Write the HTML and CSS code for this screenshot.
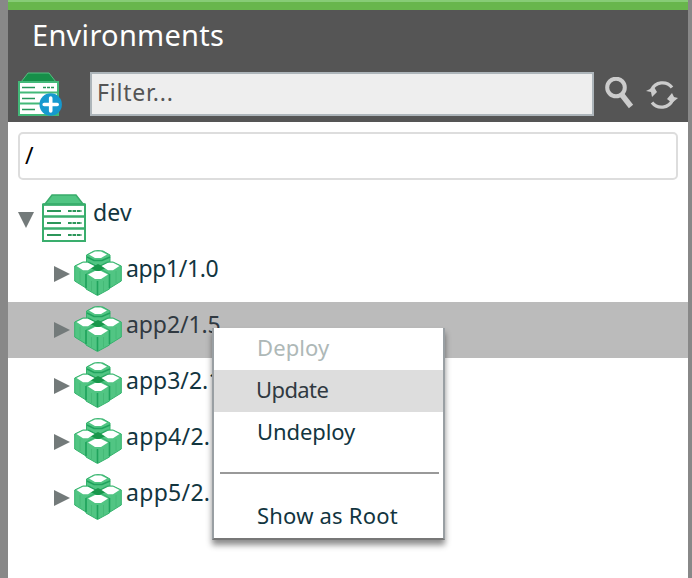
FILE: index.html
```html
<!DOCTYPE html>
<html lang="en">
<head>
<meta charset="utf-8">
<title>Environments</title>
<link rel="stylesheet" href="styles.css">
</head>
<body>
<svg class="defs" aria-hidden="true">
  <symbol id="cubes" viewBox="0 0 48 48">
    <g fill="#51c583" stroke="#35b36d" stroke-width="1" stroke-linejoin="round">
      <path d="M12.500 5L20 1L24 .6L29 1L36 5V12L24 18L12.500 12Z"/>
      <path d="M.7 16L9 12L15 12L24 17V32L12 38L.7 31Z"/>
      <path d="M47.300 16L39 12L33 12L24 17V32L36 38L47.300 31Z"/>
      <path d="M12 24L20 20L28 20L35.500 24V39L23.500 45.500L12 39Z"/>
    </g>
    <path d="M13 7L20 10.500H28L36 7M12 24V38M35.500 24V38M23.500 31V45M14 12.500L24 17.500L35 12.500" fill="none" stroke="#20a35d" stroke-width="1.600"/>
    <path d="M16 18L24 14L32 18L24 21.500Z" fill="#18974b"/>
    <path d="M15 4.500L21 1.600H27L33 4.500L27 8H21ZM2.500 16L9 12.700H14L20.500 16L14 20.300H9ZM27.500 16L34 12.700H39L45.500 16L39 20.300H34ZM14 24.500L21 21H27L34 24.500L27 29H21Z" fill="#fff"/>
    <path d="M17.500 31V41M29.500 31V41M6 21V33M42 21V33" stroke="#45ba77" stroke-width="1"/>
  </symbol>
</svg>
<main class="panel">
  <header class="header">
    <h1 class="title">Environments</h1>
    <div class="toolbar">
      <svg class="add" viewBox="0 0 44 44">
        <path d="M10 1H31L38 10H3Z" fill="#168f49" stroke="#55bd80"/>
        <path d="M1 10H40V43H1Z" fill="#fff" stroke="#43b979" stroke-width="2"/>
        <path d="M1 20.500H40M1 31.500H40" stroke="#43b979" stroke-width="2"/>
        <path d="M4 15.500H17M4 26.500H17M4 37.500H17" stroke="#26965a" stroke-width="1.600"/>
        <path d="M25 15.500H37" stroke="#26965a" stroke-width="1.600" stroke-dasharray="3 1"/>
        <circle cx="32.700" cy="32.500" r="11.200" fill="#1699cf"/>
        <path d="M32.700 26V39M26.200 32.500H39.200" stroke="#fff" stroke-width="3.600" stroke-linecap="round"/>
      </svg>
      <input class="filter" placeholder="Filter..." aria-label="Filter">
      <svg class="search" viewBox="0 0 30 34">
        <circle cx="11" cy="10.500" r="8.800" fill="none" stroke="#ccc" stroke-width="4"/>
        <path d="M17 18L26 29.500" stroke="#ccc" stroke-width="5.400"/>
      </svg>
      <svg class="refresh" viewBox="0 0 32 28">
        <path d="M5.500 9A12 12 0 0 1 26 6.500M26.500 19A12 12 0 0 1 6 21.500" fill="none" stroke="#ccc" stroke-width="3.200"/>
        <path d="M0 10L8 6L11 11L6 16L5 11ZM21 18L26 12L28 16L32 17L26 22Z" fill="#ccc"/>
      </svg>
    </div>
  </header>
  <div class="path">/</div>
  <div class="tree">
    <div class="row root">
      <svg class="arrow" viewBox="0 0 16 16"><path d="M0 0H16L8 16Z"/></svg>
      <svg class="server" viewBox="0 0 44 48">
        <path d="M10 1H34L41 10H3Z" fill="#51c583" stroke="#39ac6b" stroke-width="1.500"/>
        <path d="M1 10.500H43V47H1Z" fill="#fff" stroke="#3aae6d" stroke-width="2"/>
        <path d="M1 10.500H43M1 22.500H43M1 34.500H43" stroke="#3aae6d" stroke-width="2.300"/>
        <path d="M5 17H19M5 29H19M5 41H19" stroke="#2c965a" stroke-width="2"/>
        <path d="M26 17H40M26 29H40M26 41H40" stroke="#2c965a" stroke-width="2" stroke-dasharray="3.700 .8"/>
      </svg>
      <span class="label">dev</span>
    </div>
    <div class="row"><svg class="arrow" viewBox="0 0 16 16"><path d="M0 0L16 8L0 16Z"/></svg><svg class="cubes"><use href="#cubes"/></svg><span class="label">app1/1.0</span></div>
    <div class="row selected"><svg class="arrow" viewBox="0 0 16 16"><path d="M0 0L16 8L0 16Z"/></svg><svg class="cubes"><use href="#cubes"/></svg><span class="label">app2/1.5</span></div>
    <div class="row"><svg class="arrow" viewBox="0 0 16 16"><path d="M0 0L16 8L0 16Z"/></svg><svg class="cubes"><use href="#cubes"/></svg><span class="label">app3/2.1</span></div>
    <div class="row"><svg class="arrow" viewBox="0 0 16 16"><path d="M0 0L16 8L0 16Z"/></svg><svg class="cubes"><use href="#cubes"/></svg><span class="label wide">app4/2.</span></div>
    <div class="row"><svg class="arrow" viewBox="0 0 16 16"><path d="M0 0L16 8L0 16Z"/></svg><svg class="cubes"><use href="#cubes"/></svg><span class="label wide">app5/2.</span></div>
  </div>
</main>
<div class="menu">
  <div class="item disabled">Deploy</div>
  <div class="item active">Update</div>
  <div class="item">Undeploy</div>
  <div class="separator"></div>
  <div class="item last">Show as Root</div>
</div>
</body>
</html>
```
FILE: styles.css
```css
* { box-sizing: border-box; }
body {
  margin: 0;
  height: 578px;
  padding: 0 4px 0 8px;
  overflow: hidden;
  background: #888;
  color: #12353f;
  font-family: "Noto Sans", sans-serif;
}
.defs { position: absolute; width: 0; height: 0; }
svg { display: block; flex: none; }
.panel { height: 578px; background: #fff; }
.header {
  height: 122px;
  border-top: 2px solid #87cc76;
  background: linear-gradient(#68b64c 8px, #555 8px);
}
.title {
  height: 68px;
  margin: 0;
  padding: 14px 0 0 24px;
  color: #fff;
  font-size: 29px;
  line-height: 38px;
  font-weight: 400;
  letter-spacing: .28px;
}
.toolbar { display: flex; height: 46px; padding: 2px 9px 0 10px; }
.add { width: 44px; height: 44px; }
.filter {
  width: 504px;
  height: 44px;
  margin: 0 11px 0 28px;
  padding: 0 5px 5px;
  border: 2px solid #adb5ba;
  border-radius: 0;
  background: #eee;
  color: #555;
  font: 23px "Noto Sans", sans-serif;
  letter-spacing: .8px;
}
.filter::placeholder { color: #555; opacity: 1; }
.search { width: 30px; height: 34px; margin-top: 5px; }
.refresh { width: 32px; height: 28px; margin: 9px 0 0 11px; }
.path {
  height: 48px;
  margin: 10px 10px 0;
  padding-left: 5px;
  border: 2px solid #ddd;
  border-radius: 5px;
  color: #000;
  font-size: 23px;
  line-height: 43px;
}
.tree { padding-top: 10px; }
.row { display: flex; height: 56px; padding-left: 46px; }
.root { padding-left: 10px; }
.selected { background: #bbb; color: #303941; }
.arrow { width: 16px; height: 16px; margin-top: 20px; fill: #737a7a; }
.root .arrow { margin-top: 22px; }
.cubes { width: 48px; height: 48px; margin: 4px 4px 0; }
.server { width: 44px; height: 48px; margin: 4px 7px 0 8px; }
.label { font-size: 23px; line-height: 44px; letter-spacing: -.4px; white-space: nowrap; }
.root .label { letter-spacing: .2px; }
.selected .label { letter-spacing: -.1px; }
.row:nth-child(4) .label { letter-spacing: 0; }
.row .wide { letter-spacing: .3px; }
.menu {
  position: absolute;
  left: 212px;
  top: 328px;
  width: 233px;
  height: 212px;
  border: 2px solid #999fa3;
  border-width: 0 2px 2px;
  border-bottom-color: #777;
  background: #fff;
  box-shadow: 0 5px 6px rgba(0, 0, 0, .45);
}
.item { height: 42px; padding-left: 43px; font-size: 22px; line-height: 38px; letter-spacing: -.1px; }
.disabled { color: #aeb8b7; letter-spacing: .1px; }
.active { background: #ddd; color: #303941; padding-left: 42px; letter-spacing: -.6px; }
.last { letter-spacing: .2px; }
.separator { height: 2px; margin: 18px 4px 22px 6px; background: #999; }
```
